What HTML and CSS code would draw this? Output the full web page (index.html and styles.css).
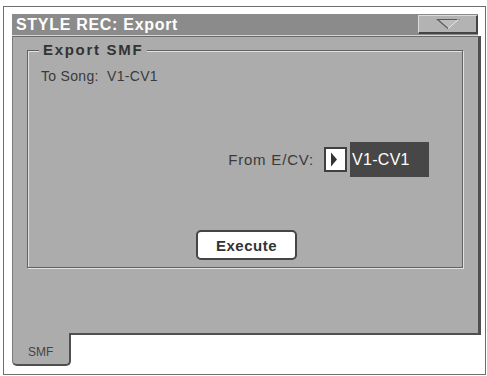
FILE: index.html
```html
<!DOCTYPE html>
<html lang="en">
<head>
  <meta charset="UTF-8">
  <meta name="viewport" content="width=device-width, initial-scale=1.0">
  <title>STYLE REC: Export</title>
  <link rel="stylesheet" href="styles.css">
</head>
<body>
<div class="screen">
  <div class="title-bar">
    <span class="title">STYLE REC: Export</span>
    <button class="menu-btn">
      <svg width="24" height="12" viewBox="0 0 24 12">
        <polygon points="1.5,1.5 22.5,1.5 12,10.5" fill="#bdbdbd" stroke="#5a5a5a" stroke-width="1.2"/>
        <polyline points="22.5,1.5 12,10.5" fill="none" stroke="#e8e8e8" stroke-width="1.2"/>
      </svg>
    </button>
  </div>

  <div class="panel">
    <div class="group">
      <div class="legend">Export SMF</div>
      <div class="to-song">To Song:&nbsp;&nbsp;V1-CV1</div>

      <div class="from-row">
        <span class="from-label">From E/CV:</span>
        <span class="arrow-box">
          <svg width="8" height="15" viewBox="0 0 8 15"><polygon points="1,0.5 7,7.5 1,14.5" fill="#333"/></svg>
        </span>
        <span class="value-box">V1-CV1</span>
      </div>

      <button class="execute">Execute</button>
    </div>
  </div>

  <div class="tab-row">
    <div class="tab">SMF</div>
    <div class="tab-rest"></div>
  </div>
</div>
</body>
</html>
```

FILE: styles.css
```css
body {
  margin: 0;
  background-color: #fff;
  font-family: "Liberation Sans", Arial, sans-serif;
}
.screen {
  margin: 6px 0 0 3px;
  width: 483px;
  height: 369px;
  box-sizing: border-box;
  border: 1px solid #6e6e6e;
  background-color: #fff;
  padding: 7px 0 0 8px;
}
.title-bar {
  width: 466px;
  height: 22px;
  box-sizing: border-box;
  background-color: #8b8b8b;
  border-bottom: 1px solid #d6d6d6;
  display: flex;
  align-items: center;
  justify-content: space-between;
}
.title {
  color: #fff;
  font-weight: bold;
  font-size: 16px;
  letter-spacing: 0.7px;
  padding-left: 4px;
}
.menu-btn {
  width: 60px;
  height: 19px;
  margin: 0 0 1px 0;
  padding: 0;
  box-sizing: border-box;
  background-color: #b3b3b3;
  border-top: 1px solid #dcdcdc;
  border-left: 1px solid #dcdcdc;
  border-right: 2px solid #444;
  border-bottom: 2px solid #444;
  display: flex;
  align-items: center;
  justify-content: center;
}
.panel {
  width: 469px;
  height: 297px;
  box-sizing: border-box;
  background-color: #acacac;
  border-top: 1px solid #6a6a6a;
  border-left: 1px solid #7a7a7a;
  border-right: 3px solid #4f4f4f;
  padding: 13px 0 0 14px;
}
.group {
  position: relative;
  width: 436px;
  height: 218px;
  box-sizing: border-box;
  border: 1px solid #616161;
  box-shadow: inset 1px 1px 0 #e2e2e2, 1px 1px 0 #e2e2e2;
  padding: 17px 0 0 13px;
  color: #3a3a3a;
}
.legend {
  position: absolute;
  top: -10px;
  left: 11px;
  padding: 0 4px;
  line-height: 18px;
  background-color: #acacac;
  font-weight: bold;
  font-size: 15px;
  letter-spacing: 1.7px;
  color: #333;
}
.to-song {
  font-size: 14px;
  line-height: 16px;
  letter-spacing: 0.3px;
}
.from-row {
  display: flex;
  align-items: center;
  justify-content: flex-end;
  margin: 58px 33px 0 0;
  height: 35px;
}
.from-label {
  font-size: 15px;
  letter-spacing: 0.8px;
  margin-right: 10px;
}
.arrow-box {
  width: 23px;
  height: 25px;
  box-sizing: border-box;
  border: 2px solid #404040;
  background-color: #fff;
  display: flex;
  align-items: center;
  justify-content: center;
  padding-right: 3px;
  margin-right: 3px;
}
.value-box {
  width: 79px;
  height: 35px;
  box-sizing: border-box;
  background-color: #474747;
  color: #fff;
  font-size: 16px;
  line-height: 35px;
  padding-left: 2px;
  letter-spacing: 0.3px;
}
.execute {
  display: block;
  margin: 53px 0 0 155px;
  width: 101px;
  height: 30px;
  box-sizing: border-box;
  background-color: #fff;
  border: 2px solid #454545;
  border-radius: 5px;
  font-family: "Liberation Sans", Arial, sans-serif;
  font-weight: bold;
  font-size: 15px;
  letter-spacing: 0.5px;
  color: #333;
  padding: 0;
}
.tab-row {
  display: flex;
  width: 469px;
  height: 33px;
}
.tab {
  width: 59px;
  height: 33px;
  box-sizing: border-box;
  background-color: #acacac;
  border-left: 1px solid #7a7a7a;
  border-right: 2px solid #4f4f4f;
  border-bottom: 2px solid #4f4f4f;
  border-radius: 0 0 5px 5px;
  font-size: 12px;
  color: #444;
  padding: 12px 0 0 15px;
}
.tab-rest {
  flex: 1;
  border-top: 2px solid #4f4f4f;
  margin-left: -2px;
}
```
